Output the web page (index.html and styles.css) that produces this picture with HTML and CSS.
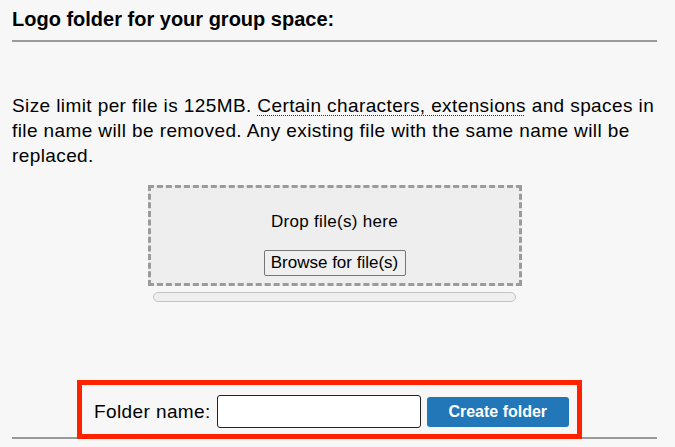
FILE: index.html
```html
<!DOCTYPE html>
<html>
<head>
<meta charset="utf-8">
<link rel="stylesheet" href="styles.css">
</head>
<body>
<div class="page">
  <h2 class="title">Logo folder for your group space:</h2>
  <hr class="rule">
  <p class="info">Size limit per file is 125MB. <abbr class="hint" title="">Certain characters, extensions</abbr> and spaces in file name will be removed. Any existing file with the same name will be replaced.</p>
  <div class="drop">
    <div class="drop-text">Drop file(s) here</div>
    <button class="browse">Browse for file(s)</button>
  </div>
  <div class="progress"></div>
  <div class="form-wrap">
    <form class="folder-form">
      <label class="folder-label">Folder name:</label>
      <input class="folder-input" type="text">
      <button class="create" type="button">Create folder</button>
    </form>
  </div>
  <hr class="rule bottom-rule">
</div>
</body>
</html>
```
FILE: styles.css
```css
html, body {
  margin: 0;
  padding: 0;
  background: #f7f7f7;
}
body {
  font-family: "Liberation Sans", Arial, sans-serif;
  color: #000;
}
.page {
  padding: 0 18px 0 12px;
}
.title {
  margin: 0;
  padding-top: 7px;
  font-size: 20px;
  font-weight: bold;
  line-height: 24px;
}
.rule {
  margin: 9px 0 0 0;
  border: 0;
  border-top: 2px solid #9a9a9a;
  height: 0;
}
.info {
  margin: 51px 0 0 0;
  font-size: 19px;
  letter-spacing: 0.4px;
  line-height: 25px;
}
.hint {
  text-decoration-line: underline;
  text-decoration-style: dotted;
  text-decoration-thickness: 1px;
  text-decoration-color: #333;
  text-underline-offset: 3px;
}
.drop {
  margin: 17px auto 0;
  width: 368px;
  height: 95px;
  border: 3px dashed #9b9b9b;
  background: #eeeeee;
  display: flex;
  flex-direction: column;
  align-items: center;
}
.drop-text {
  margin-top: 24px;
  font-size: 17px;
  letter-spacing: 0.3px;
  line-height: 20px;
}
.browse {
  margin-top: 18px;
  font-family: "Liberation Sans", Arial, sans-serif;
  font-size: 17px;
  white-space: nowrap;
  padding: 0;
  width: 142px;
  height: 26px;
  background: #efefef;
  border: 1px solid #767676;
  border-radius: 2px;
  color: #000;
}
.progress {
  margin: 6px auto 0;
  width: 361px;
  height: 8px;
  border: 1px solid #c4c4c4;
  border-radius: 6px;
  background: #efefef;
}
.form-wrap {
  display: flex;
  margin-top: 83px;
  padding-left: 70px;
}
.folder-form {
  display: flex;
  align-items: center;
  margin: 0;
  padding: 10px 8px 6px 12px;
  outline: 5px solid #ff2200;
  outline-offset: 0;
  width: 475px;
  height: 33px;
  box-sizing: content-box;
}
.folder-label {
  font-size: 19px;
  letter-spacing: 0.4px;
  margin-right: 6px;
}
.folder-input {
  width: 204px;
  height: 33px;
  box-sizing: border-box;
  border: 1px solid #222;
  border-radius: 3px;
  background: #fff;
  padding: 0 4px;
  margin: 0 6px 0 0;
}
.create {
  width: 142px;
  height: 30px;
  background: #2277b8;
  color: #fff;
  border: 0;
  border-radius: 3px;
  font-family: "Liberation Sans", Arial, sans-serif;
  font-weight: bold;
  font-size: 16px;
}
.bottom-rule {
  margin-top: 3px;
}
```
